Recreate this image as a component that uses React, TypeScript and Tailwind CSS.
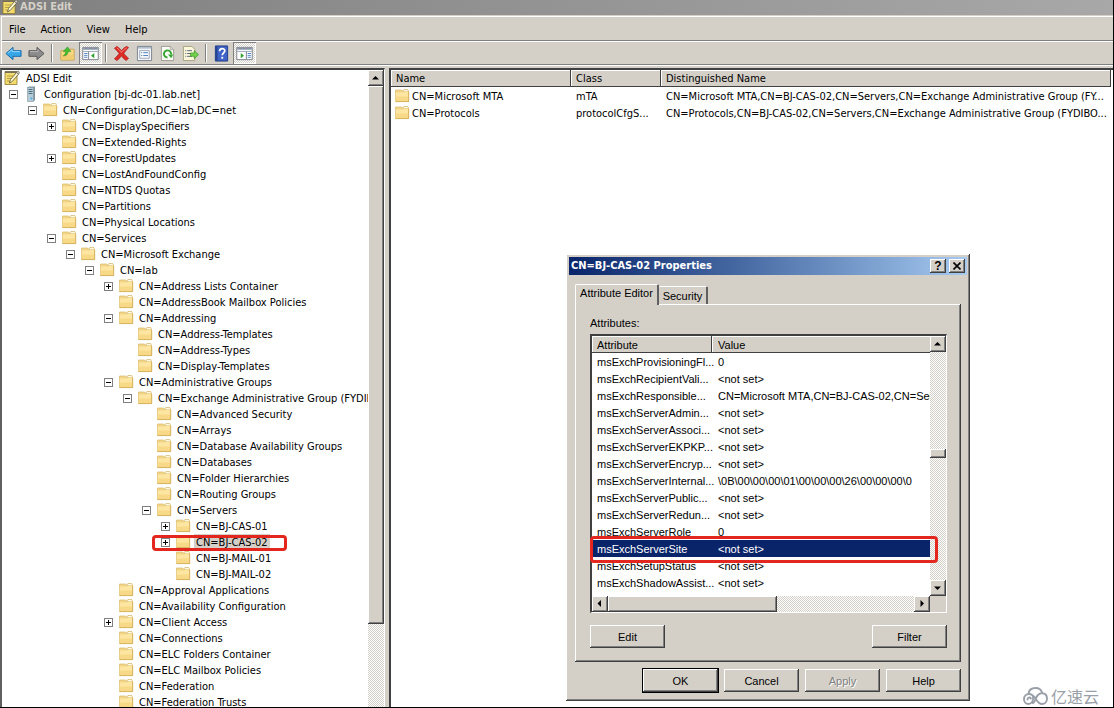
import React from "react";

type TreeItem = {
  label: string;
  icon?: "edit" | "server" | "folder";
  toggle?: "+" | "-";
  selected?: boolean;
  children?: TreeItem[];
};

const f = (label: string, toggle?: "+" | "-", children?: TreeItem[]): TreeItem => ({ label, toggle, children });

const tree: TreeItem[] = [
  {
    label: "Configuration [bj-dc-01.lab.net]",
    icon: "server",
    toggle: "-",
    children: [
      f("CN=Configuration,DC=lab,DC=net", "-", [
        f("CN=DisplaySpecifiers", "+"),
        f("CN=Extended-Rights"),
        f("CN=ForestUpdates", "+"),
        f("CN=LostAndFoundConfig"),
        f("CN=NTDS Quotas"),
        f("CN=Partitions"),
        f("CN=Physical Locations"),
        f("CN=Services", "-", [
          f("CN=Microsoft Exchange", "-", [
            f("CN=lab", "-", [
              f("CN=Address Lists Container", "+"),
              f("CN=AddressBook Mailbox Policies"),
              f("CN=Addressing", "-", [
                f("CN=Address-Templates"),
                f("CN=Address-Types"),
                f("CN=Display-Templates"),
              ]),
              f("CN=Administrative Groups", "-", [
                f("CN=Exchange Administrative Group (FYDIB", "-", [
                  f("CN=Advanced Security"),
                  f("CN=Arrays"),
                  f("CN=Database Availability Groups"),
                  f("CN=Databases"),
                  f("CN=Folder Hierarchies"),
                  f("CN=Routing Groups"),
                  f("CN=Servers", "-", [
                    f("CN=BJ-CAS-01", "+"),
                    { label: "CN=BJ-CAS-02", toggle: "+", selected: true },
                    f("CN=BJ-MAIL-01"),
                    f("CN=BJ-MAIL-02"),
                  ]),
                ]),
              ]),
              f("CN=Approval Applications"),
              f("CN=Availability Configuration"),
              f("CN=Client Access", "+"),
              f("CN=Connections"),
              f("CN=ELC Folders Container"),
              f("CN=ELC Mailbox Policies"),
              f("CN=Federation"),
              f("CN=Federation Trusts"),
            ]),
          ]),
        ]),
      ]),
    ],
  },
];

const objects = [
  ["CN=Microsoft MTA", "mTA", "CN=Microsoft MTA,CN=BJ-CAS-02,CN=Servers,CN=Exchange Administrative Group (FY..."],
  ["CN=Protocols", "protocolCfgS...", "CN=Protocols,CN=BJ-CAS-02,CN=Servers,CN=Exchange Administrative Group (FYDIBO..."],
];

const attributes = [
  ["msExchProvisioningFl...", "0"],
  ["msExchRecipientVali...", "<not set>"],
  ["msExchResponsible...", "CN=Microsoft MTA,CN=BJ-CAS-02,CN=Serv"],
  ["msExchServerAdmin...", "<not set>"],
  ["msExchServerAssoci...", "<not set>"],
  ["msExchServerEKPKP...", "<not set>"],
  ["msExchServerEncryp...", "<not set>"],
  ["msExchServerInternal...", "\\0B\\00\\00\\00\\01\\00\\00\\00\\26\\00\\00\\00\\0"],
  ["msExchServerPublic...", "<not set>"],
  ["msExchServerRedun...", "<not set>"],
  ["msExchServerRole", "0"],
  ["msExchServerSite", "<not set>"],
  ["msExchSetupStatus", "<not set>"],
  ["msExchShadowAssist...", "<not set>"],
  ["msExchShadowC", ""],
];

const raised = "bg-[#d4d0c8] shadow-[inset_-1px_-1px_#404040,inset_1px_1px_#ffffff,inset_-2px_-2px_#808080]";
const dither = "bg-[repeating-conic-gradient(#ffffff_0_25%,#d4d0c8_0_50%)] bg-[length:2px_2px]";

function FolderIcon() {
  return (
    <svg className="h-4 w-4 shrink-0" viewBox="0 0 16 16">
      <path d="M9 3.200l.8-1.700h4l.7 1.700V5H9z" fill="#fffbe8" stroke="#cdb069" strokeWidth=".7" />
      <path d="M1.500 2h6.200l1 1.500h5.800v10H1.500z" fill="#f2d588" stroke="#d9b968" strokeWidth=".7" />
      <path d="M1.800 4.500h6.900l1.200-1h4.500v9.800H1.800z" fill="#fde6a2" />
      <path d="M1.800 8.500h12.600v4.800H1.800z" fill="#f7d987" />
      <path d="M1.500 13.600h13.200V4" fill="none" stroke="#cfa851" strokeWidth=".8" />
    </svg>
  );
}

function EditIcon() {
  return (
    <svg className="h-4 w-4 shrink-0" viewBox="0 0 16 16">
      <path d="M1 1.500h12v13H1z" fill="#f4dc6c" stroke="#8d7a33" strokeWidth=".8" />
      <path d="M1 1.200h12v1.800H1z" fill="#77715c" />
      <path d="M3 6h6M3 8.500h4M3 11h3" stroke="#a38f3e" strokeWidth=".8" />
      <path d="M5.500 13l1-3.500L12.500 2.500l2 1.700-6 7z" fill="#fdf6c9" stroke="#5b5540" strokeWidth=".8" />
      <path d="M12.500 2.500L14 .800l1.700 1.500-1.200 1.900z" fill="#c9c4b6" stroke="#666" strokeWidth=".6" />
    </svg>
  );
}

function ServerIcon() {
  return (
    <svg className="h-4 w-4 shrink-0" viewBox="0 0 16 16">
      <path d="M4.500 1.500L6 .500h6v13.500l-1.500 1.500z" fill="#7e939e" />
      <path d="M4.500 1.500h6v14h-6z" fill="#b7ccd6" stroke="#7e939e" strokeWidth=".6" />
      <path d="M5.500 3.500h4M5.500 5.500h4M5.500 7.500h4" stroke="#3f6272" strokeWidth=".9" />
      <path d="M7.500 11.500h1.800v1.800H7.500z" fill="#45b3ea" />
    </svg>
  );
}

function Toggle({ sign, label }: { sign: "+" | "-"; label: string }) {
  return (
    <button aria-label={(sign === "+" ? "Expand " : "Collapse ") + label} className="h-[9px] w-[9px] border border-[#808080] bg-white">
      <svg className="block h-[7px] w-[7px]" viewBox="0 0 7 7" shapeRendering="crispEdges">
        <path d={sign === "+" ? "M1 3.500h5M3.500 1v5" : "M1 3.500h5"} stroke="#000" />
      </svg>
    </button>
  );
}

function TreeNode({ item }: { item: TreeItem }) {
  return (
    <li>
      <div className="relative flex h-4 w-max items-center">
        <span className="flex w-[14px] items-center">{item.toggle && <Toggle sign={item.toggle} label={item.label} />}</span>
        {item.icon === "server" ? <ServerIcon /> : <FolderIcon />}
        <span className={item.selected ? "ml-[3px] bg-[#d4d0c8] px-0.5 pt-0.5" : "ml-[3px] px-0.5 pt-0.5"}>{item.label}</span>
        {item.selected && (
          <span className="pointer-events-none absolute -left-[9px] top-px h-4 w-[135px] rounded-[4px] border-[3px] border-[#e3271f]" />
        )}
      </div>
      {item.children && (
        <ul className="pl-[19px]">
          {item.children.map((c) => (
            <TreeNode key={c.label} item={c} />
          ))}
        </ul>
      )}
    </li>
  );
}

type Dir = "up" | "down" | "left" | "right";
const arrows: Record<Dir, string> = {
  up: "M4 9.500h7L7.500 6z",
  down: "M4 6.500h7L7.500 10z",
  left: "M9 4v7L5.500 7.500z",
  right: "M6.500 4v7L10 7.500z",
};

function ScrollButton({ dir }: { dir: Dir }) {
  return (
    <button aria-label={"Scroll " + dir} className={"h-4 w-4 shrink-0 " + raised}>
      <svg className="block h-4 w-4" viewBox="0 0 16 16">
        <path d={arrows[dir]} fill="#000" />
      </svg>
    </button>
  );
}

function PushButton({ children, primary, disabled }: { children: string; primary?: boolean; disabled?: boolean }) {
  return (
    <button
      disabled={disabled}
      className={
        "h-[23px] w-[75px] text-center " +
        raised +
        (primary ? " outline outline-1 outline-black" : "") +
        (disabled ? " text-[#808080] [text-shadow:1px_1px_#ffffff]" : "")
      }
    >
      {children}
    </button>
  );
}

function ToolButton({ label, pressed, children }: { label: string; pressed?: boolean; children: React.ReactNode }) {
  return (
    <button
      aria-label={label}
      className={
        "flex h-[22px] w-[23px] items-center justify-center " +
        (pressed ? "shadow-[inset_1px_1px_#808080,inset_-1px_-1px_#ffffff] " + dither : "")
      }
    >
      <svg className="h-[17px] w-[17px]" viewBox="0 0 18 18">
        {children}
      </svg>
    </button>
  );
}

function Separator() {
  return <span className="mx-[3px] h-[18px] w-0.5 border-l border-r border-l-[#808080] border-r-white" />;
}

function PaneDrawing({ flip }: { flip?: boolean }) {
  return (
    <g>
      <path d="M.800 2.500h16.400v13H.800z" fill="#fff" stroke="#7a828c" />
      <path d="M1.300 3h15.400v2H1.300z" fill="#8793a6" />
      <path d="M1.300 6.800h15.400" stroke="#9aa5b5" />
      <path d={flip ? "M11 7v8" : "M7 7v8"} stroke="#7a828c" />
      <path d={flip ? "M12.300 9h3.500M12.300 11h3.500M12.300 13h3.500" : "M2.300 9h3.500M2.300 11h3.500M2.300 13h3.500"} stroke="#4c7fc0" />
      <path d={flip ? "M5 8.500v5.500l3.500-2.750z" : "M13 8.500v5.500L9.500 11.250z"} fill="#2fa12f" />
    </g>
  );
}

function Toolbar() {
  return (
    <div className="flex h-[23px] items-center border-t border-white">
      <ToolButton label="Back">
        <path d="M1 9l7.500-6.500V6H17v6H8.500v3.500z" fill="#35a7e8" stroke="#1667a5" strokeLinejoin="round" />
        <path d="M2.800 8.800L7.500 4.800V7H16" fill="none" stroke="#9bdcff" />
      </ToolButton>
      <ToolButton label="Forward">
        <path d="M17 9L9.500 2.500V6H1v6h8.500v3.500z" fill="#8b8b8b" stroke="#555" strokeLinejoin="round" />
        <path d="M2 7h8.500V4.800" fill="none" stroke="#bbb" />
      </ToolButton>
      <Separator />
      <ToolButton label="Up one level">
        <path d="M2 6h5l1-1.500h8V16H2z" fill="#f9dc88" stroke="#c9a34c" />
        <path d="M2.500 10h13v5.500h-13z" fill="#f1cc70" />
        <path d="M4.500 11.500c3.500 0 5-1.500 5.200-4.500h2.800L9 2 4.500 7h2.700c-.2 1.800-.9 3.500-2.700 4.500z" fill="#45c02f" stroke="#2b8a1c" strokeWidth=".6" />
      </ToolButton>
      <ToolButton label="Show/Hide Console Tree" pressed>
        <PaneDrawing />
      </ToolButton>
      <Separator />
      <ToolButton label="Delete">
        <path d="M4 1.500c2 1 3.500 2.500 5 4.500 1.500-2 3.500-4 6-4.500l1.500 1.500C14.500 4.500 13 6.500 11.500 9c1.500 2 3 3.500 5 5L14 16.500c-2-1-3.700-3-5-5-1.500 2-3 4-5 5L1.500 14.500c2-1.500 3.500-3.500 5-5.500C5 7 3.500 5 1.500 3.500z" fill="#dd2a25" stroke="#a81a16" strokeWidth=".7" />
        <path d="M4 3C6 4.500 7.500 6 9 8c1.500-2 3-3.700 5.500-5" fill="none" stroke="#f58a82" />
      </ToolButton>
      <ToolButton label="Properties">
        <path d="M1.500 1.500h15v15h-15z" fill="#f2f5f8" stroke="#78818c" />
        <path d="M2 3h14" stroke="#a9b7c6" strokeWidth="1.500" />
        <path d="M4 6h10v8H4z" fill="#fff" stroke="#8b98aa" strokeWidth=".9" />
        <path d="M5.500 8.200h1.200M7.700 8.200h5M5.500 11.200h1.200M7.700 11.200h5" stroke="#3b73b9" />
      </ToolButton>
      <ToolButton label="Refresh">
        <path d="M2.500 1.500h9.500l3.500 3.500v11.500h-13z" fill="#fbfbf5" stroke="#9a9a92" />
        <path d="M12 1.500V5h3.500" fill="#dcdcd4" stroke="#9a9a92" strokeWidth=".7" />
        <path d="M12.800 10A3.800 3.800 0 1 0 9 13.300" fill="none" stroke="#35a52e" strokeWidth="2" />
        <path d="M9.500 10h5.500L13 14z" fill="#35a52e" />
      </ToolButton>
      <ToolButton label="Export List">
        <path d="M1.500 1.500h9l3 3v12h-12z" fill="#fbf7dc" stroke="#a59f7c" />
        <path d="M3.500 6h1M5.500 6h5M3.500 9h1M5.500 9h4M3.500 12h1M5.500 12h5" stroke="#555a70" />
        <path d="M9 8.500h4V6l4.500 4.200-4.500 4.300V12H9z" fill="#6fd04b" stroke="#3a9422" strokeWidth=".7" />
      </ToolButton>
      <Separator />
      <ToolButton label="Help">
        <path d="M2.500 1h13v16h-13z" fill="#3f63c6" stroke="#1f3a86" />
        <path d="M3 1.500h1.800v15H3z" fill="#26458f" />
        <path d="M7 6.500C7 3 12.500 3 12.500 6.200c0 2-2.700 2.200-2.700 4.600" fill="none" stroke="#fff" strokeWidth="1.800" />
        <path d="M8.800 12.500h2v2h-2z" fill="#fff" />
      </ToolButton>
      <ToolButton label="Show/Hide Action Pane" pressed>
        <PaneDrawing flip />
      </ToolButton>
    </div>
  );
}

const th = "h-4 border-r border-b border-[#404040] bg-[#d4d0c8] p-0 pt-0.5 text-left font-normal shadow-[inset_1px_1px_#ffffff]";

function PropertiesDialog() {
  return (
    <section
      role="dialog"
      aria-label="CN=BJ-CAS-02 Properties"
      className="absolute left-[566px] top-[254px] w-[404px] bg-[#d4d0c8] p-[3px] pb-[9px] font-['Liberation_Sans',sans-serif] text-[11px] leading-[14px] shadow-[inset_-1px_-1px_#404040,inset_1px_1px_#ffffff,inset_-2px_-2px_#808080]"
    >
      <header className="flex h-[18px] items-center gap-[3px] bg-linear-to-r from-[#0a246a] to-[#a6caf0] px-0.5">
        <h2 className="flex-1 font-['DejaVu_Sans_Condensed','DejaVu_Sans',sans-serif] font-bold text-white">
          CN=BJ-CAS-02 Properties
        </h2>
        <button aria-label="Help" className={"h-[14px] w-4 text-[12px] font-bold leading-[14px] " + raised}>
          ?
        </button>
        <button aria-label="Close" className={"flex h-[14px] w-4 items-center justify-center " + raised}>
          <svg className="h-2 w-2" viewBox="0 0 8 8">
            <path d="M.5.5l7 7M7.500.5l-7 7" stroke="#000" strokeWidth="1.600" />
          </svg>
        </button>
      </header>
      <div className="px-1.5 pt-[9px]">
        <div role="tablist" className="flex items-end">
          <button
            role="tab"
            aria-selected="true"
            className="relative -mb-px h-[21px] w-[84px] rounded-t-[2px] border-l border-t border-r-2 border-l-white border-t-white border-r-[#606060] bg-[#d4d0c8] pb-1"
          >
            Attribute Editor
          </button>
          <button role="tab" aria-selected="false" className="h-[18px] w-[49px] rounded-t-[2px] border-r-2 border-t border-r-[#606060] border-t-white">
            Security
          </button>
        </div>
        <div role="tabpanel" className="pb-[14px] pl-[15px] pr-[14px] pt-3 shadow-[inset_-1px_-1px_#404040,inset_1px_1px_#ffffff,inset_-2px_-2px_#808080]">
          <p>Attributes:</p>
          <div className="relative mt-1 flex flex-col border-l-2 border-t-2 border-b border-r border-b-white border-l-[#404040] border-r-white border-t-[#404040] bg-[#d4d0c8]">
            <div className="flex h-[260px]">
              <div className="min-w-0 flex-1 overflow-hidden bg-white">
                <table className="w-full table-fixed border-separate border-spacing-0">
                  <thead>
                    <tr className="h-[17px]">
                      <th className={th + " w-[120px] pl-[5px]"}>Attribute</th>
                      <th className={th + " border-r-0 pl-1.5"}>Value</th>
                    </tr>
                  </thead>
                  <tbody>
                    {attributes.map(([name, value]) => (
                      <tr key={name} className={name === "msExchServerSite" ? "h-[17px] bg-[#0a246a] text-white" : "h-[17px]"}>
                        <td className="whitespace-nowrap p-0 pl-[5px]">{name}</td>
                        <td className="whitespace-nowrap p-0 pl-1.5">{value}</td>
                      </tr>
                    ))}
                  </tbody>
                </table>
              </div>
              <div className={"flex w-4 flex-col " + dither}>
                <ScrollButton dir="up" />
                <div className="flex-1" />
                <div className={"h-[9px] " + raised} />
                <div className="h-[122px]" />
                <ScrollButton dir="down" />
              </div>
            </div>
            <div className="flex h-4 pr-4">
              <div className={"flex flex-1 " + dither}>
                <ScrollButton dir="left" />
                <div className={"w-[169px] " + raised} />
                <div className="flex-1" />
                <ScrollButton dir="right" />
              </div>
            </div>
            <span className="pointer-events-none absolute -left-0.5 top-[200px] h-[27px] w-[348px] rounded-[4px] border-[3px] border-[#e3271f]" />
          </div>
          <div className="mt-3 flex justify-between">
            <PushButton>Edit</PushButton>
            <PushButton>Filter</PushButton>
          </div>
        </div>
        <footer className="mt-[7px] flex justify-end gap-1.5">
          <PushButton primary>OK</PushButton>
          <PushButton>Cancel</PushButton>
          <PushButton disabled>Apply</PushButton>
          <PushButton>Help</PushButton>
        </footer>
      </div>
    </section>
  );
}

export default function App() {
  return (
    <div className="relative flex h-screen flex-col overflow-hidden border-b border-r border-black bg-[#d4d0c8] font-['DejaVu_Sans_Condensed','DejaVu_Sans',sans-serif] text-[11px] leading-[14px] text-black">
      <header className="flex h-[15px] shrink-0 items-center gap-0.5 overflow-hidden bg-linear-to-r from-[#808080] to-[#a8a8a8] pb-0.5 pl-0.5">
        <EditIcon />
        <h1 className="font-bold text-[#d4d0c8]">ADSI Edit</h1>
      </header>
      <div className="ml-px mt-px shrink-0 border-l border-t border-white">
        <nav className="flex h-[24px] items-center border-b border-[#808080] pl-[7px]">
          {["File", "Action", "View", "Help"].map((m) => (
            <button key={m} className="mr-[15px] pt-0.5">
              {m}
            </button>
          ))}
        </nav>
        <Toolbar />
      </div>
      <div className="mb-0.5 h-0.5 shrink-0 border-y border-[#808080] border-b-white" />
      <main className="flex min-h-0 flex-1">
        <div className="mr-1 flex w-[385px] shrink-0 border-l-2 border-t-2 border-r border-l-[#606060] border-r-white border-t-[#404040] bg-white">
          <div className="min-w-0 flex-1 overflow-hidden">
            <ul className="pl-0.5">
              <li>
                <div className="flex h-4 items-center">
                  <EditIcon />
                  <span className="ml-1.5 pt-0.5">ADSI Edit</span>
                </div>
                <ul className="pl-[5px]">
                  {tree.map((item) => (
                    <TreeNode key={item.label} item={item} />
                  ))}
                </ul>
              </li>
            </ul>
          </div>
          <div className={"flex w-4 flex-col " + dither}>
            <ScrollButton dir="up" />
            <div className={"h-[84.5%] " + raised} />
          </div>
        </div>
        <div className="min-w-0 flex-1 border-l-2 border-t-2 border-[#404040] bg-white pr-0.5">
          <table className="w-full table-fixed border-separate border-spacing-0">
            <thead>
              <tr className="h-[17px]">
                <th className={th + " w-[180px] pl-[5px]"}>Name</th>
                <th className={th + " w-[90px] pl-[5px]"}>Class</th>
                <th className={th + " pl-[5px]"}>Distinguished Name</th>
              </tr>
            </thead>
            <tbody>
              {objects.map(([name, cls, dn]) => (
                <tr key={name} className="h-[17px]">
                  <td className="p-0 pl-[3px]">
                    <div className="flex items-center gap-0.5">
                      <FolderIcon />
                      <span className="pt-0.5">{name}</span>
                    </div>
                  </td>
                  <td className="whitespace-nowrap p-0 pl-[5px] pt-0.5">{cls}</td>
                  <td className="whitespace-nowrap p-0 pl-[5px] pt-0.5">{dn}</td>
                </tr>
              ))}
            </tbody>
          </table>
        </div>
      </main>
      <PropertiesDialog />
      <div className="absolute -bottom-px -right-px flex h-[25px] w-[109px] items-center gap-[3px] bg-white pl-[18px] text-[#9aa0a8]">
        <svg className="h-[18px] w-[25px]" viewBox="0 0 25 18" fill="none" stroke="currentColor" strokeWidth="1.900" strokeLinecap="round">
          <path d="M5.500 6.500C6 3 9 1 12.500 1c3.500 0 6 2 6.700 5" />
          <path d="M10 9.500c.800 3.700-1 7.500-4.600 7.500C3 17 1 15 1 12.300c0-3 2.200-5.300 5-5.300 3.500 0 5.500 2.800 7 5.200S16.300 17 19 17s5-2.200 5-5.200C24 8.500 22 6.300 19 6.300c-3.800 0-5.500 3-6.600 6.200-.5 1.600-1.200 2.900-2.400 3.800" />
          <path d="M4.500 12.500c0-2 2.500-2.600 3.400-1" />
        </svg>
        <span className="font-['Noto_Sans_CJK_SC',sans-serif] text-[16px] leading-5">亿速云</span>
      </div>
    </div>
  );
}
